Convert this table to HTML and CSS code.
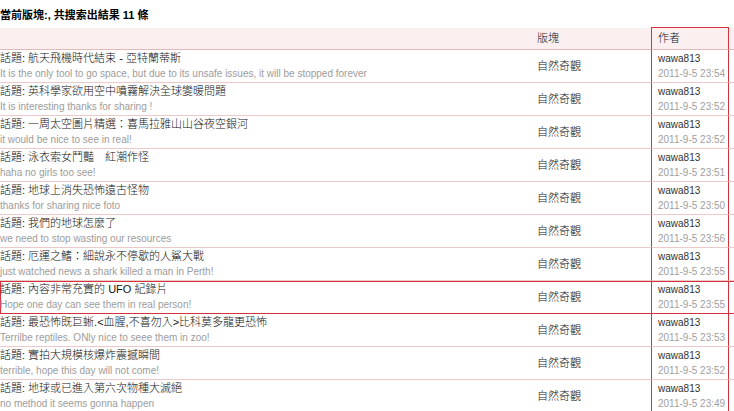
FILE: index.html
```html
<!DOCTYPE html>
<html lang="zh-Hant">
<head>
<meta charset="utf-8">
<title>搜索結果</title>
<link rel="stylesheet" href="styles.css">
</head>
<body>
<div class="title">當前版塊:, 共搜索出結果 11 條</div>
<table class="results">
  <colgroup>
    <col class="w-topic"><col class="w-board"><col class="w-author"><col class="w-extra">
  </colgroup>
  <thead>
    <tr><th><span class="th-label"></span></th><th class="c-board"><span class="th-label">版塊</span></th><th class="c-author"><span class="th-label">作者</span></th><th><span class="th-label"></span></th></tr>
  </thead>
  <tbody>
    <tr>
      <td><div class="topic">話題: 航天飛機時代結束 - 亞特蘭蒂斯</div><div class="reply">It is the only tool to go space, but due to its unsafe issues, it will be stopped forever</div></td>
      <td class="c-board">自然奇觀</td>
      <td class="c-author"><div class="user">wawa813</div><div class="date">2011-9-5 23:54</div></td>
      <td></td>
    </tr>
    <tr>
      <td><div class="topic">話題: 英科學家欲用空中噴霧解決全球變暖問題</div><div class="reply">It is interesting thanks for sharing !</div></td>
      <td class="c-board">自然奇觀</td>
      <td class="c-author"><div class="user">wawa813</div><div class="date">2011-9-5 23:52</div></td>
      <td></td>
    </tr>
    <tr>
      <td><div class="topic">話題: 一周太空圖片精選：喜馬拉雅山山谷夜空銀河</div><div class="reply">it would be nice to see in real!</div></td>
      <td class="c-board">自然奇觀</td>
      <td class="c-author"><div class="user">wawa813</div><div class="date">2011-9-5 23:52</div></td>
      <td></td>
    </tr>
    <tr>
      <td><div class="topic">話題: 泳衣索女鬥豔　紅潮作怪</div><div class="reply">haha no girls too see!</div></td>
      <td class="c-board">自然奇觀</td>
      <td class="c-author"><div class="user">wawa813</div><div class="date">2011-9-5 23:51</div></td>
      <td></td>
    </tr>
    <tr>
      <td><div class="topic">話題: 地球上消失恐怖遠古怪物</div><div class="reply">thanks for sharing nice foto</div></td>
      <td class="c-board">自然奇觀</td>
      <td class="c-author"><div class="user">wawa813</div><div class="date">2011-9-5 23:50</div></td>
      <td></td>
    </tr>
    <tr>
      <td><div class="topic">話題: 我們的地球怎麼了</div><div class="reply">we need to stop wasting our resources</div></td>
      <td class="c-board">自然奇觀</td>
      <td class="c-author"><div class="user">wawa813</div><div class="date">2011-9-5 23:56</div></td>
      <td></td>
    </tr>
    <tr>
      <td><div class="topic">話題: 厄運之鰭：細說永不停歇的人鯊大戰</div><div class="reply">just watched news a shark killed a man in Perth!</div></td>
      <td class="c-board">自然奇觀</td>
      <td class="c-author"><div class="user">wawa813</div><div class="date">2011-9-5 23:55</div></td>
      <td></td>
    </tr>
    <tr class="hl">
      <td><div class="topic">話題: 內容非常充實的 UFO 紀錄片</div><div class="reply">Hope one day can see them in real person!</div></td>
      <td class="c-board">自然奇觀</td>
      <td class="c-author"><div class="user">wawa813</div><div class="date">2011-9-5 23:55</div></td>
      <td></td>
    </tr>
    <tr>
      <td><div class="topic">話題: 最恐怖既巨蜥.&lt;血腥,不喜勿入&gt;比科莫多龍更恐怖</div><div class="reply">Terrilbe reptiles. ONly nice to seee them in zoo!</div></td>
      <td class="c-board">自然奇觀</td>
      <td class="c-author"><div class="user">wawa813</div><div class="date">2011-9-5 23:53</div></td>
      <td></td>
    </tr>
    <tr>
      <td><div class="topic">話題: 實拍大規模核爆炸震撼瞬間</div><div class="reply">terrible, hope this day will not come!</div></td>
      <td class="c-board">自然奇觀</td>
      <td class="c-author"><div class="user">wawa813</div><div class="date">2011-9-5 23:52</div></td>
      <td></td>
    </tr>
    <tr class="last">
      <td><div class="topic">話題: 地球或已進入第六次物種大滅絕</div><div class="reply">no method it seems gonna happen</div></td>
      <td class="c-board">自然奇觀</td>
      <td class="c-author"><div class="user">wawa813</div><div class="date">2011-9-5 23:49</div></td>
      <td></td>
    </tr>
  </tbody>
</table>
</body>
</html>
```
FILE: styles.css
```css
html, body {
  margin: 0;
  padding: 0;
  background: #ffffff;
  overflow: hidden;
}

body {
  font-family: "Liberation Sans", "Noto Sans CJK TC", sans-serif;
  color: #111111;
}

.title {
  font-size: 11px;
  font-weight: bold;
  line-height: 16px;
  height: 16px;
  overflow: hidden;
  padding: 7px 0 4px 0;
  color: #000000;
}

.results {
  width: 734px;
  table-layout: fixed;
  border-collapse: separate;
  border-spacing: 0;
}

.w-topic { width: 531px; }
.w-board { width: 120px; }
.w-author { width: 78px; }
.w-extra { width: 5px; }

.results th {
  padding: 0;
  text-align: left;
  vertical-align: top;
  font-weight: 300;
  font-size: 11px;
  color: #111111;
  background: #fcefef;
  background-clip: padding-box;
  border-top: 1px solid transparent;
  border-bottom: 1px solid #e3b9b9;
}

.th-label {
  display: block;
  height: 20px;
  line-height: 19px;
  overflow: hidden;
}

.results td {
  padding: 1px 0 0 0;
  vertical-align: top;
  border-bottom: 1px solid #ebcaca;
}

.results .c-board {
  padding-left: 6px;
  padding-top: 0;
  vertical-align: middle;
  font-size: 11px;
  line-height: 14px;
  font-weight: 300;
}

.results th.c-board {
  padding-left: 6px;
}

.results .c-author {
  padding-left: 6px;
  padding-top: 1px;
  border-left: 1px solid #d6323c;
  border-right: 1px solid #d6323c;
}

.results th.c-author {
  border-top: 1px solid #d6323c;
}

.topic {
  font-size: 11px;
  font-weight: 300;
  line-height: 15px;
  height: 15px;
  overflow: hidden;
  white-space: nowrap;
  color: #111111;
}

.reply {
  font-size: 10px;
  line-height: 16px;
  height: 16px;
  white-space: nowrap;
  color: #9c9c9c;
}

.user {
  font-size: 10px;
  line-height: 15px;
  height: 15px;
  color: #333333;
}

.date {
  font-size: 10px;
  line-height: 15px;
  height: 15px;
  color: #a0a0a0;
  white-space: nowrap;
}

.hl td {
  border-bottom-color: #d6323c;
  box-shadow: inset 0 1px 0 #d6323c;
}

.hl td:first-child {
  box-shadow: inset 0 1px 0 #d6323c, inset 1px 0 0 #d6323c;
}

.last td.c-author {
  border-bottom-color: #d6323c;
}
```
